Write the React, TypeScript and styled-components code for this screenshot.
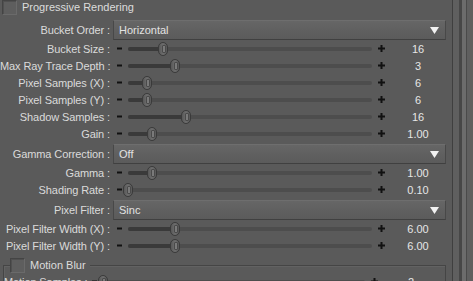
import styled, { createGlobalStyle } from "styled-components";

const GlobalStyle = createGlobalStyle`
  html, body {
    margin: 0;
    padding: 0;
    background: #5a5a5a;
  }
  * {
    box-sizing: border-box;
  }
`;

const Window = styled.div`
  display: flex;
  width: 473px;
  height: 281px;
  overflow: hidden;
  background: #5a5a5a;
  font-family: "Liberation Sans", Arial, sans-serif;
  font-size: 11px;
  color: #dadada;
`;

const Main = styled.div`
  display: flex;
  flex-direction: column;
  width: 452px;
  flex: none;
`;

const ScrollBar = styled.div`
  flex: 1;
  background: linear-gradient(
    to right,
    #3f3f3f 0px,
    #3f3f3f 1px,
    #5f5f5f 1px,
    #5f5f5f 7px,
    #474747 7px,
    #474747 10px,
    #6c6c6c 10px,
    #6c6c6c 14px,
    #4a4a4a 14px,
    #4a4a4a 15px,
    #5f5f5f 15px
  );
`;

const CheckRow = styled.div<{ $indent: number }>`
  display: flex;
  align-items: center;
  gap: 5px;
  height: 14px;
  padding-left: ${(p) => p.$indent}px;
`;

const Check = styled.span`
  width: 15px;
  height: 15px;
  flex: none;
  background: #5e5e5e;
  border: 1px solid #444;
  border-right-color: #6a6a6a;
  border-bottom-color: #6a6a6a;
  box-shadow: inset 1px 1px 0 #505050;
`;

const CheckLabel = styled.span`
  white-space: nowrap;
  color: #dcdcdc;
`;

const Row = styled.div<{ $labelWidth: number }>`
  display: grid;
  grid-template-columns: ${(p) => p.$labelWidth}px 18px 1fr 18px 56px;
  align-items: center;
  height: 17px;
  padding-right: 6px;
  flex: none;
`;

const Label = styled.span`
  text-align: right;
  white-space: nowrap;
  letter-spacing: -0.1px;
  color: #dadada;
`;

const SelectRowBox = styled.div<{ $top: number }>`
  display: flex;
  align-items: center;
  height: 20px;
  margin-top: ${(p) => p.$top}px;
  padding-right: 6px;
  flex: none;
`;

const SelectLabel = styled(Label)`
  width: 110px;
  flex: none;
`;

const Select = styled.div`
  flex: 1;
  margin-left: 3px;
  height: 20px;
  display: flex;
  align-items: center;
  justify-content: space-between;
  padding: 0 6px 0 5px;
  background: linear-gradient(#666 0%, #606060 50%, #5b5b5b 100%);
  border: 1px solid #484848;
  border-top-color: #6e6e6e;
  border-bottom-color: #404040;
  color: #e2e2e2;
`;

const Sign = styled.span`
  display: flex;
  justify-content: center;
  align-items: center;
`;

const Track = styled.div`
  position: relative;
  height: 4px;
  background: #4d4d4d;
  border-radius: 2px;
`;

const Fill = styled.div`
  height: 100%;
  background: #3a3a3a;
  border-radius: 2px;
`;

const Thumb = styled.div`
  position: absolute;
  top: 50%;
  width: 10px;
  height: 14px;
  margin-left: -5px;
  transform: translateY(-50%);
  border-radius: 5px;
  border: 1px solid #3a3a3a;
  background: linear-gradient(to right, #585858, #6e6e6e 50%, #585858);
  &::after {
    content: "";
    position: absolute;
    left: 3px;
    top: 2px;
    bottom: 2px;
    width: 2px;
    border-radius: 1px;
    border: 1px solid #4a4a4a;
    background: #7a7a7a;
  }
`;

const Value = styled.span`
  text-align: center;
  color: #e6e6e6;
`;

const Group = styled.div`
  margin: 11px 6px 0 3px;
  border: 1px solid #454545;
  border-bottom: none;
  box-shadow: inset 1px 1px 0 #626262;
  flex: none;
`;

const GroupTitle = styled.div`
  display: flex;
  align-items: center;
  gap: 5px;
  width: fit-content;
  height: 16px;
  margin: -9px 0 0 6px;
  padding-right: 4px;
  background: #5a5a5a;
`;

const Minus = () => (
  <svg width="5" height="3" viewBox="0 0 5 3">
    <rect x="0" y="0.5" width="5" height="2" fill="#111" />
  </svg>
);

const Plus = () => (
  <svg width="7" height="7" viewBox="0 0 7 7">
    <rect x="0" y="2.5" width="7" height="2" fill="#111" />
    <rect x="2.5" y="0" width="2" height="7" fill="#111" />
  </svg>
);

const Arrow = () => (
  <svg width="9" height="7" viewBox="0 0 9 7">
    <polygon points="0,0 9,0 4.5,7" fill="#f2f2f2" />
  </svg>
);

type SliderProps = {
  label: string;
  value: string;
  pos: number;
  labelWidth?: number;
};

const Slider = ({ label, value, pos, labelWidth = 110 }: SliderProps) => (
  <Row $labelWidth={labelWidth}>
    <Label>{label} :</Label>
    <Sign>
      <Minus />
    </Sign>
    <Track>
      <Fill style={{ width: `${pos * 100}%` }} />
      <Thumb style={{ left: `${pos * 100}%` }} />
    </Track>
    <Sign>
      <Plus />
    </Sign>
    <Value>{value}</Value>
  </Row>
);

const Dropdown = ({ label, value, top }: { label: string; value: string; top: number }) => (
  <SelectRowBox $top={top}>
    <SelectLabel>{label} :</SelectLabel>
    <Select>
      <span>{value}</span>
      <Arrow />
    </Select>
  </SelectRowBox>
);

const sliders1 = [
  { label: "Bucket Size", value: "16", pos: 0.145 },
  { label: "Max Ray Trace Depth", value: "3", pos: 0.193 },
  { label: "Pixel Samples (X)", value: "6", pos: 0.078 },
  { label: "Pixel Samples (Y)", value: "6", pos: 0.078 },
  { label: "Shadow Samples", value: "16", pos: 0.238 },
  { label: "Gain", value: "1.00", pos: 0.098 },
];

export default function App() {
  return (
    <>
      <GlobalStyle />
      <Window>
        <Main>
          <CheckRow $indent={2}>
            <Check />
            <CheckLabel>Progressive Rendering</CheckLabel>
          </CheckRow>
          <Dropdown label="Bucket Order" value="Horizontal" top={6} />
          <div style={{ height: 1 }} />
          {sliders1.map((s) => (
            <Slider key={s.label} {...s} />
          ))}
          <Dropdown label="Gamma Correction" value="Off" top={2} />
          <Slider label="Gamma" value="1.00" pos={0.098} />
          <Slider label="Shading Rate" value="0.10" pos={0.0} />
          <Dropdown label="Pixel Filter" value="Sinc" top={2} />
          <Slider label="Pixel Filter Width (X)" value="6.00" pos={0.193} />
          <Slider label="Pixel Filter Width (Y)" value="6.00" pos={0.193} />
          <Group>
            <GroupTitle>
              <Check />
              <CheckLabel>Motion Blur</CheckLabel>
            </GroupTitle>
            <Slider label="Motion Samples" value="2" pos={0} labelWidth={81} />
          </Group>
        </Main>
        <ScrollBar />
      </Window>
    </>
  );
}
